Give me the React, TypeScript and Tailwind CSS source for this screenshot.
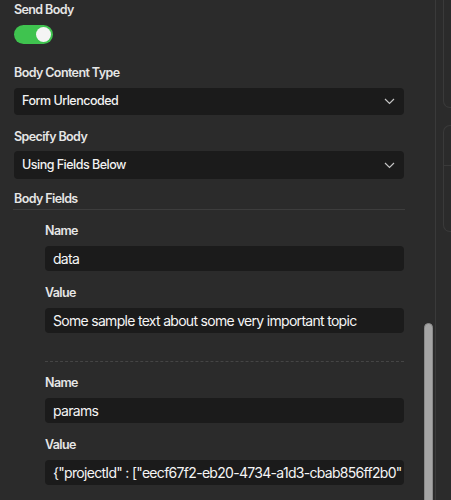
const font = { fontFamily: 'Inter, "Noto Sans", sans-serif' };

function Label({ children, className = '' }: { children: string; className?: string }) {
  return (
    <div className={`text-[12.5px] leading-4 font-semibold tracking-[-0.6px] text-[#e6e6e6] ${className}`}>
      {children}
    </div>
  );
}

function Chevron() {
  return (
    <svg width="11" height="7" viewBox="0 0 11 7" className="text-[#c4c4c4]">
      <polyline points="1,1 5.5,5.5 10,1" fill="none" stroke="currentColor" strokeWidth="1.2" />
    </svg>
  );
}

function Select({ value, className = '' }: { value: string; className?: string }) {
  return (
    <div
      className={`flex items-center justify-between rounded-[4px] bg-[#1b1b1b] pl-2 pr-[9px] text-[12.5px] font-medium tracking-[-0.5px] text-[#f2f2f2] ${className}`}
    >
      <span>{value}</span>
      <Chevron />
    </div>
  );
}

function Input({ value, className = '' }: { value: string; className?: string }) {
  return (
    <div
      className={`flex items-center overflow-hidden whitespace-nowrap rounded-[4px] bg-[#1b1b1b] pl-2 text-[14px] tracking-[-0.7px] text-[#f5f5f5] ${className}`}
    >
      {value}
    </div>
  );
}

function Field({ name, value }: { name: string; value: string }) {
  return (
    <>
      <Label className="mt-[13px]">Name</Label>
      <Input value={name} className="mt-[7px] h-[25px]" />
      <Label className="mt-[14px]">Value</Label>
      <Input value={value} className="mt-[7px] h-[25px]" />
    </>
  );
}

export default function App() {
  return (
    <div className="flex h-[500px] w-[451px] overflow-hidden bg-[#2b2b2b]" style={font}>
      <div className="relative w-[436px] shrink-0 border-r border-[#3a3a3a]">
        <div className="ml-[14px] flex w-[390px] flex-col">
          <Label className="mt-[2px]">Send Body</Label>
          <div className="mt-[7px] flex h-[19px] w-[39px] items-center justify-end rounded-full bg-[#3fc34f] pr-[2px]">
            <div className="h-[15px] w-[15px] rounded-full bg-[#f4f4f4]" />
          </div>

          <Label className="mt-[21px]">Body Content Type</Label>
          <Select value="Form Urlencoded" className="mt-[7px] h-[27px]" />

          <Label className="mt-[14px]">Specify Body</Label>
          <Select value="Using Fields Below" className="mt-[6px] h-[28px]" />

          <Label className="mt-[12px]">Body Fields</Label>
          <div className="mt-[2px] h-px w-[392px] -ml-px bg-[#3d3d3d]" />

          <div className="flex flex-col pl-[31px]">
            <Field name="data" value="Some sample text about some very important topic" />
            <div className="mt-[28px] border-t border-dashed border-[#454545]" />
            <Field name="params" value={'{"projectId" : ["eecf67f2-eb20-4734-a1d3-cbab856ff2b0"'} />
          </div>
        </div>

        {/* scroll thumb */}
        <div className="absolute left-[424px] top-[323px] h-[190px] w-[9px] rounded-full border border-[#8a8a8a] bg-[#a5a5a5]" />
      </div>

      <div className="flex flex-1 flex-col pl-[7px]">
        <div className="-mt-3 h-[120px] rounded-l-[7px] border border-r-0 border-[#3a3a3a]" />
        <div className="mt-[17px] flex h-[107px] flex-col rounded-l-[7px] border border-r-0 border-[#3a3a3a]">
          <div className="mt-[39px] border-t border-[#3a3a3a]" />
        </div>
      </div>
    </div>
  );
}
